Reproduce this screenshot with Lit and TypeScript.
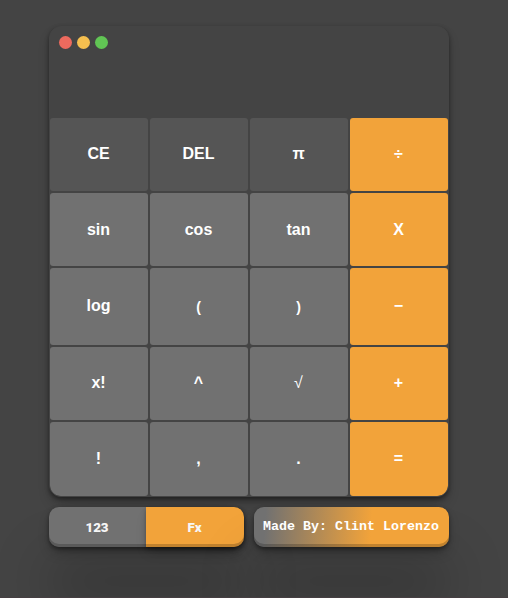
import { LitElement, html, css } from "lit";
import { customElement } from "lit/decorators.js";
import { classMap } from "lit/directives/class-map.js";

const ROWS = [
  ["CE", "DEL", "π", "÷"],
  ["sin", "cos", "tan", "X"],
  ["log", "(", ")", "−"],
  ["x!", "^", "√", "+"],
  ["!", ",", ".", "="],
];

@customElement("app-root")
export class AppRoot extends LitElement {
  static styles = css`
    :host {
      display: block;
      box-sizing: border-box;
      height: 598px;
      padding: 26px 59px 0 49px;
      overflow: hidden;
      background: #444;
      border-bottom: 1px solid #463f42;
      color: #fff;
      font-family: "Liberation Sans", Arial, sans-serif;
    }
    .calculator {
      box-sizing: border-box;
      width: 400px;
      height: 471px;
      border: 1px solid #444;
      border-radius: 12px;
      overflow: hidden;
      background: #444;
      box-shadow: rgba(0, 0, 0, 0.4) 0 2px 4px, rgba(0, 0, 0, 0.3) 0 7px 13px -3px;
    }
    .screen {
      box-sizing: border-box;
      height: 91px;
      padding: 9px;
      display: flex;
      gap: 5px;
    }
    .dot {
      width: 13px;
      height: 13px;
      border-radius: 50%;
    }
    .red { background: #ed6a5e; }
    .yellow { background: #f5bf4f; }
    .green { background: #61c554; }
    .keys {
      display: grid;
      grid-template-columns: repeat(4, 98px);
      grid-template-rows: 73px 73px 77px 73px 74px;
      gap: 2px;
    }
    button {
      margin: 0;
      padding: 0;
      border: 0;
      color: #fff;
      background: #717171;
    }
    .key {
      padding-right: 1px;
      border-radius: 3px;
      font: bold 16px "Liberation Sans", Arial, sans-serif;
    }
    .raised { padding-bottom: 2px; }
    .paren {
      padding: 0 1px 0 0;
      font-size: 14px;
    }
    .root { font-weight: normal; }
    .top { background: #555; }
    .operator { background: #f2a33a; }
    .low-left { border-bottom-left-radius: 10px; }
    .low-right { border-bottom-right-radius: 10px; }
    .footer {
      display: flex;
      gap: 10px;
      margin-top: 10px;
    }
    .pill {
      width: 195px;
      height: 40px;
      border-radius: 10px;
      box-shadow: rgba(0, 0, 0, 0.25) 0 54px 55px, rgba(0, 0, 0, 0.4) 0 2px 4px,
        rgba(0, 0, 0, 0.3) 0 7px 13px -3px, rgba(0, 0, 0, 0.2) 0 -3px 0 inset;
    }
    .modes { display: flex; }
    .mode {
      width: 97px;
      padding-right: 1px;
      border-radius: 10px 0 0 10px;
      color: #f6f6f6;
      font: 900 13.33px Roboto, sans-serif;
      box-shadow: rgba(0, 0, 0, 0.2) 0 -3px 0 inset;
    }
    .mode.active {
      width: 98px;
      border-radius: 0 10px 10px 0;
      background: #f2a33a;
      box-shadow: rgba(0, 0, 0, 0.3) 0 2px 4px, rgba(0, 0, 0, 0.2) 0 7px 13px -3px,
        rgba(0, 0, 0, 0.2) 0 -3px 0 inset;
    }
    .credit {
      padding: 0 1px 2px 0;
      background: linear-gradient(94deg, #717171 6%, #f2a33a 60%);
      font: bold 13.33px "Courier New", "Liberation Mono", monospace;
      white-space: nowrap;
    }
  `;

  render() {
    return html`
      <div class="calculator">
        <div class="screen">
          <span class="dot red"></span><span class="dot yellow"></span><span class="dot green"></span>
        </div>
        <div class="keys">
          ${ROWS.map((row, r) =>
            row.map(
              (label, c) => html`<button
                class=${classMap({
                  key: true,
                  raised: r === 0 || r === 2 || r === 3,
                  paren: label === "(" || label === ")",
                  root: label === "√",
                  top: r === 0 && c < 3,
                  operator: c === 3,
                  "low-left": r === 4 && c === 0,
                  "low-right": r === 4 && c === 3,
                })}
              >${label}</button>`
            )
          )}
        </div>
      </div>
      <div class="footer">
        <div class="pill modes">
          <button class="mode">123</button><button class="mode active">Fx</button>
        </div>
        <button class="pill credit">Made By: Clint Lorenzo</button>
      </div>
    `;
  }
}
